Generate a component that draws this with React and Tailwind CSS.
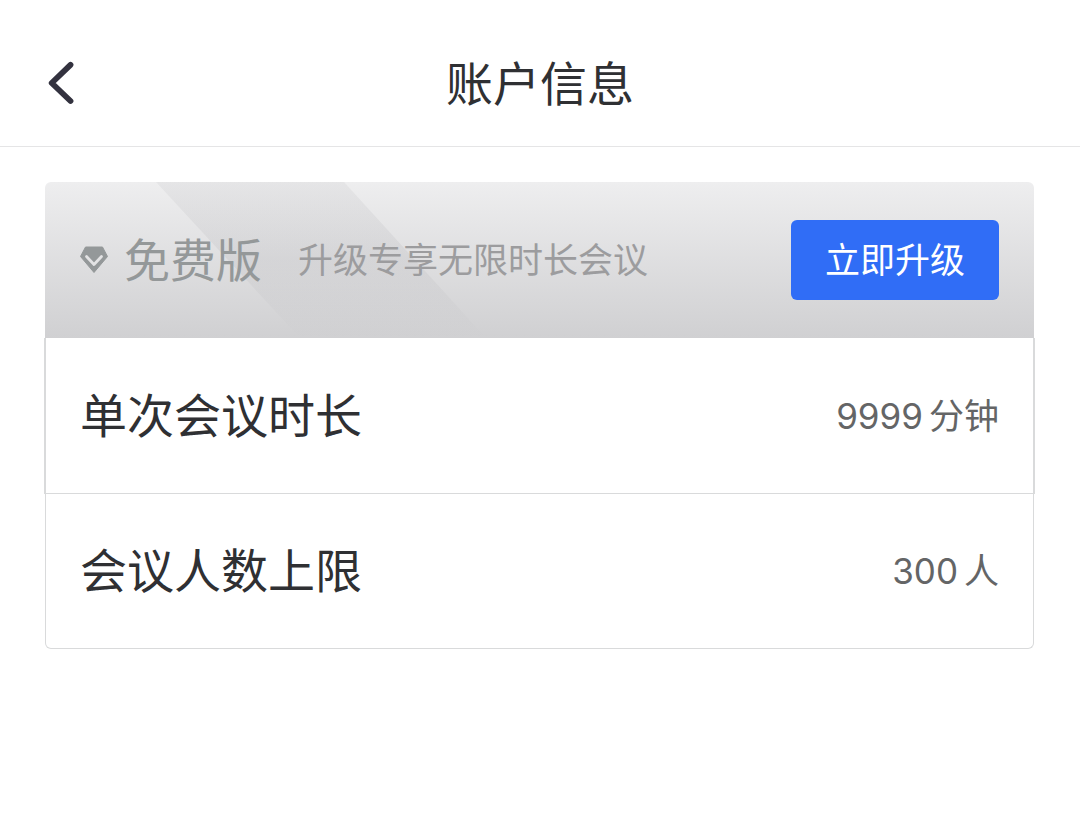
const limits = [
  { label: '单次会议时长', value: '9999', unit: '分钟' },
  { label: '会议人数上限', value: '300', unit: '人' },
];

function BackIcon() {
  return (
    <svg className="h-12 w-8" viewBox="0 0 32 48" fill="none" aria-hidden="true">
      <path d="M26.5 5.8 7.7 24l18.8 18" stroke="#33323f" strokeWidth="5.8" strokeLinecap="round" strokeLinejoin="round" />
    </svg>
  );
}

function GemIcon() {
  return (
    <svg className="h-7 w-7 shrink-0" viewBox="0 0 28 28" fill="none" aria-hidden="true">
      <path d="M5.5 1h17l5 9.5L14 26.5.5 10.5z" fill="#949899" stroke="#949899" strokeLinejoin="round" />
      <path d="m6.5 10.5 7.5 8 7.5-8" stroke="#e3e3e4" strokeWidth="2.8" strokeLinecap="round" strokeLinejoin="round" />
    </svg>
  );
}

function BannerSheen() {
  return (
    <svg className="absolute top-0 left-0 h-full w-[450px]" viewBox="0 0 450 156" preserveAspectRatio="none" aria-hidden="true">
      <defs>
        <linearGradient id="sheen" x1="0" y1="0" x2="0" y2="1">
          <stop offset="0" stopColor="#8c8c92" stopOpacity="0.09" />
          <stop offset="0.5" stopColor="#8c8c92" stopOpacity="0.12" />
          <stop offset="1" stopColor="#8c8c92" stopOpacity="0" />
        </linearGradient>
      </defs>
      <path d="M111 0h188l142 156H255z" fill="url(#sheen)" />
    </svg>
  );
}

export default function App() {
  return (
    <div className="bg-white font-['Inter','Noto_Sans_CJK_SC',sans-serif] text-[#2f3033]">
      <header className="grid grid-cols-[1fr_auto_1fr] items-center border-b border-[#e5e5e6] px-11 pt-5">
        <button type="button" aria-label="返回" className="justify-self-start">
          <BackIcon />
        </button>
        <h1 className="pt-0.5 text-[47px] leading-[124px]">账户信息</h1>
      </header>

      <main className="pt-[35px] pr-[46px] pl-[45px]">
        <section aria-label="账户信息">
          <div className="relative flex h-[156px] items-center overflow-hidden rounded-t-md bg-linear-to-b from-[#eeeeef] to-[#d0d0d2] px-[35px]">
            <BannerSheen />
            <div className="relative flex flex-1 items-center">
              <GemIcon />
              <h2 className="ml-4 text-[46px] leading-[56px] text-[#949899]">免费版</h2>
              <p className="ml-9 text-[35px] leading-[56px] text-[#9c9c9e]">升级专享无限时长会议</p>
            </div>
            <button type="button" className="relative rounded-md bg-[#306df6] px-[34px] text-[35px] leading-[80px] text-white">
              立即升级
            </button>
          </div>

          <dl className="divide-y divide-[#d9dadb] rounded-b-md border-x border-b border-[#d9dadb]">
            {limits.map(({ label, value, unit }) => (
              <div key={label} className="flex h-[154px] items-center justify-between px-[34px] first:-mx-0.5 first:h-[156px] first:border-x-2 first:border-x-[#d9dadb]">
                <dt className="text-[47px] leading-[60px]">{label}</dt>
                <dd className="flex items-baseline gap-1.5 text-[35px] leading-[60px] text-[#646566]">
                  <span>{value}</span>
                  <span>{unit}</span>
                </dd>
              </div>
            ))}
          </dl>
        </section>
      </main>
    </div>
  );
}
